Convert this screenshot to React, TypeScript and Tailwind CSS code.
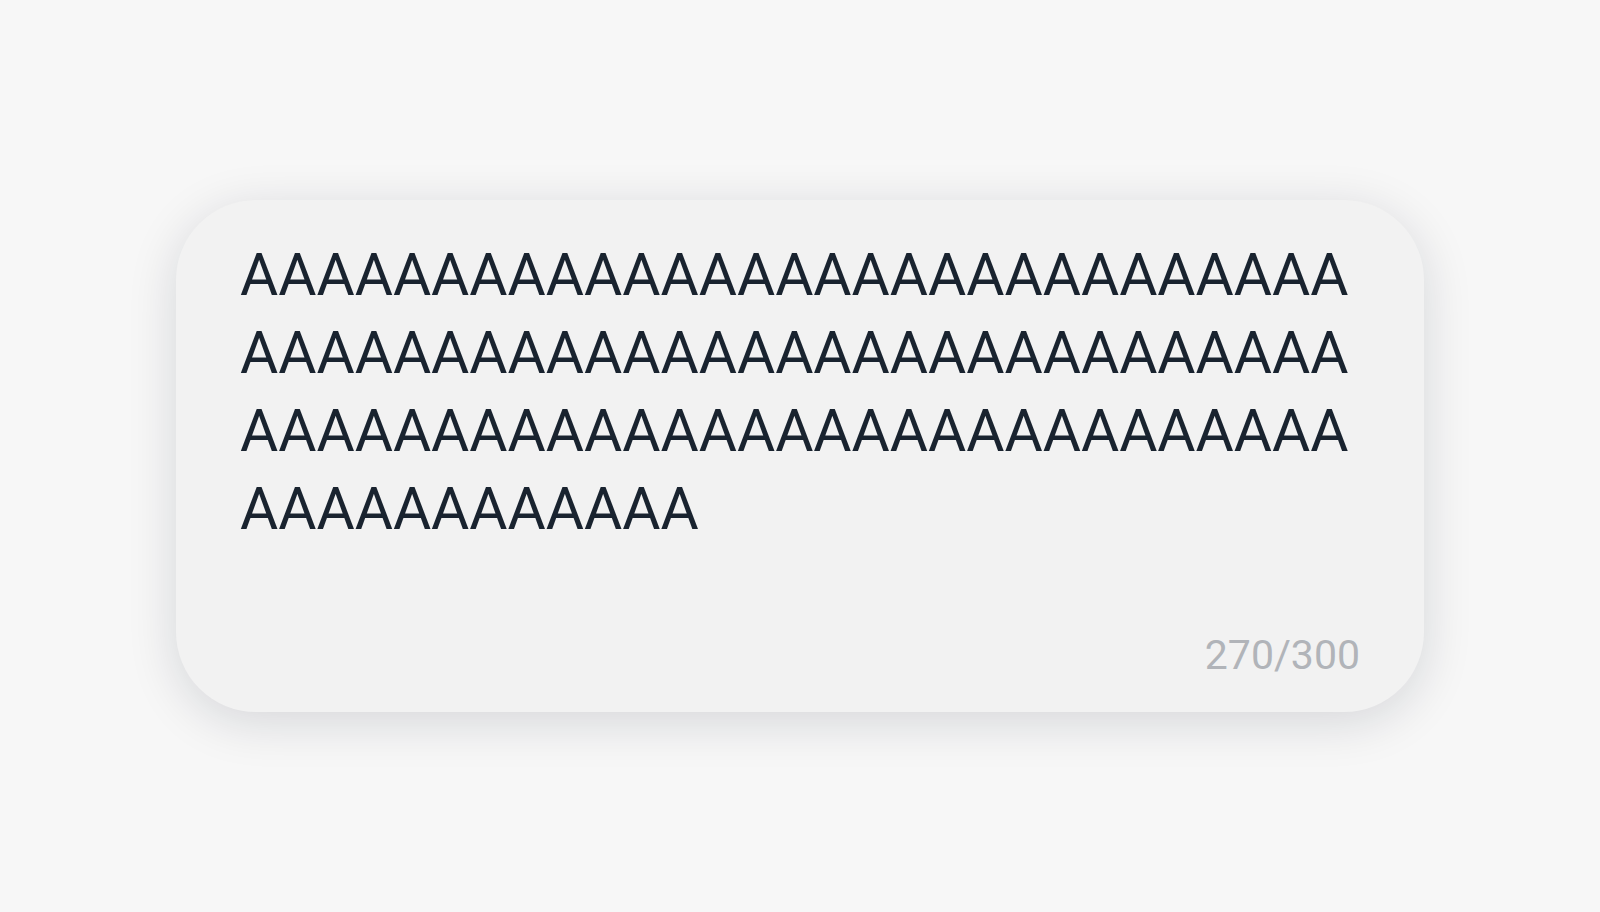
const text = 'A'.repeat(99);

export default function App() {
  return (
    <div className="min-h-screen bg-[#f7f7f7] flex justify-center pt-[200px]" style={{ fontFamily: 'Roboto, "Liberation Sans", sans-serif' }}>
      <div className="w-[1248px] h-[512px] rounded-[80px] bg-[#f2f2f2] shadow-[0_10px_50px_rgba(17,24,39,0.14)] flex flex-col pl-16 pr-16 pt-[36px] pb-[26px]">
        <p className="flex-1 text-[58.6px] leading-[78px] text-[#19232f] break-all">{text}</p>
        <span className="self-end text-[41px] text-[#b1b4b9]">270/300</span>
      </div>
    </div>
  );
}
